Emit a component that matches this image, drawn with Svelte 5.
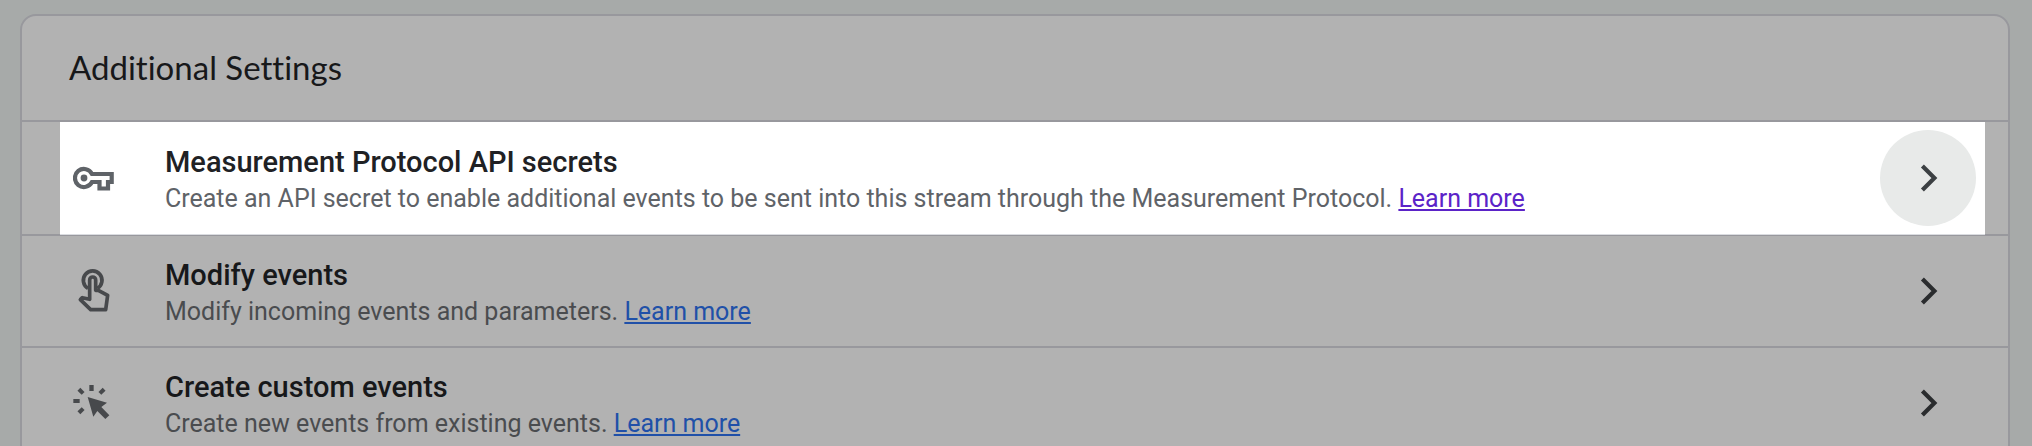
<script>
  const rows = [
    {
      id: 'secrets',
      icon: 'key',
      title: 'Measurement Protocol API secrets',
      text: 'Create an API secret to enable additional events to be sent into this stream through the Measurement Protocol.',
      active: true
    },
    { id: 'modify', icon: 'touch', title: 'Modify events', text: 'Modify incoming events and parameters.' },
    { id: 'create', icon: 'click', title: 'Create custom events', text: 'Create new events from existing events.' }
  ];
</script>

<main>
  <section class="card">
    <header><h1>Additional Settings</h1></header>
    {#each rows as row (row.id)}
      <div class="row">
        <article class:active={row.active}>
          {#if row.icon === 'key'}
            <svg class="icon" viewBox="0 0 42 48" aria-hidden="true">
              <path d="M19 20H38.7V28H35V34.5H26.5V28H19A9 9 0 1 1 19 20Z" fill="none" stroke="currentColor" stroke-width="4.2" />
              <circle cx="11" cy="24" r="3.4" fill="currentColor" />
            </svg>
          {:else if row.icon === 'touch'}
            <svg class="icon" viewBox="69 110 126 144" aria-hidden="true">
              <g fill="none" stroke="currentColor" stroke-width="11">
                <path d="M114 174A28 28 0 1 1 142 174" />
                <path d="M119 207V149A9 9 0 0 1 137 149V180H145L173 195L167 238H122L91 208L97 202Z" stroke-linejoin="round" />
              </g>
            </svg>
          {:else}
            <svg class="icon" viewBox="69 117 126 144" aria-hidden="true">
              <g fill="currentColor">
                <path d="M113 171L171 188L154 201L178 226L166 237L142 213L130 230Z" />
                <rect x="118" y="135" width="13" height="18" />
                <rect x="70" y="177" width="19" height="12" />
                <rect x="87" y="145" width="12" height="18" transform="rotate(-45 93 154)" />
                <rect x="150" y="145" width="12" height="18" transform="rotate(45 156 154)" />
                <rect x="87" y="203" width="12" height="18" transform="rotate(45 93 212)" />
              </g>
            </svg>
          {/if}
          <div class="copy">
            <h2>{row.title}</h2>
            <p>{row.text} <a href="#{row.id}">Learn more</a></p>
          </div>
          <button type="button" aria-label={row.title}>
            <svg viewBox="0 0 48 48" aria-hidden="true">
              <path d="M18.4 12L30.4 24L18.4 36" fill="none" stroke="currentColor" stroke-width="4.2" />
            </svg>
          </button>
        </article>
      </div>
    {/each}
  </section>
</main>

<style>
  :global(body) {
    margin: 0;
    background: #a7aaa9;
    overflow: hidden;
  }
  main {
    padding: 14px 22px 0 20px;
    font-family: Roboto, 'Liberation Sans', sans-serif;
  }
  .card {
    border: 2px solid #98989d;
    border-radius: 16px;
    background: #b2b2b2;
    color: #17181a;
  }
  header {
    padding: 31px 47px 33px;
    border-bottom: 2px solid #98989d;
  }
  h1 {
    margin: 0;
    font: 400 33px/40px Lato, Roboto, sans-serif;
    font-variant-ligatures: none;
  }
  .row {
    border-bottom: 2px solid #98989d;
  }
  article {
    display: flex;
    align-items: center;
    margin: 0 23px 0 38px;
    padding: 7px 9px 7px 13px;
    color: #17181a;
  }
  .icon {
    flex: none;
    width: 42px;
    height: 48px;
    color: #47494c;
  }
  .copy {
    flex: 1;
    min-width: 0;
    margin-left: 50px;
    padding-top: 4px;
  }
  h2 {
    margin: 0;
    font-size: 29px;
    font-weight: 500;
    line-height: 36px;
  }
  p {
    margin: 1px 0 0;
    font-size: 25px;
    line-height: 36px;
    color: #4a4c4f;
  }
  a {
    color: #2050a8;
    text-decoration-thickness: 2px;
    text-underline-offset: 2px;
    text-decoration-skip-ink: none;
  }
  button {
    display: grid;
    place-items: center;
    flex: none;
    width: 96px;
    height: 96px;
    padding: 0;
    border: 0;
    border-radius: 50%;
    background: transparent;
    color: #2a2c2e;
  }
  button svg {
    width: 48px;
    height: 48px;
  }
  .active {
    margin-bottom: -1px;
    padding-top: 8px;
    padding-bottom: 9px;
    background: #fff;
    box-shadow: inset 0 -1px #dadce0;
    color: #202124;
  }
  .active .icon,
  .active p {
    color: #5f6368;
  }
  .active a {
    color: #5b23c8;
  }
  .active button {
    background: #e8eae9;
    color: #3c4043;
  }
</style>
